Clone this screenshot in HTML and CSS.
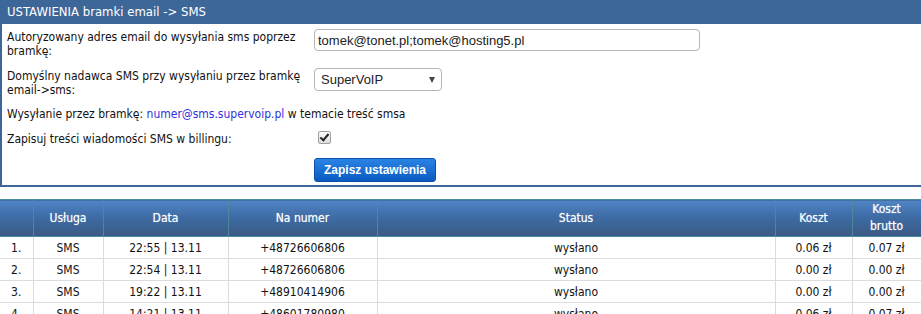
FILE: index.html
```html
<!DOCTYPE html>
<html lang="pl">
<head>
    <meta charset="UTF-8">
    <title>Bramka email -> SMS</title>
    <link rel="stylesheet" href="styles.css">
</head>
<body>
    <div class="panel">
        <div class="panel-title">USTAWIENIA bramki email -&gt; SMS</div>
        <div class="form">
            <div class="label">Autoryzowany adres email do wysyłania sms poprzez bramkę:</div>
            <div class="field"><input type="text" class="text-input" value="tomek@tonet.pl;tomek@hosting5.pl"></div>

            <div class="label">Domyślny nadawca SMS przy wysyłaniu przez bramkę email-&gt;sms:</div>
            <div class="field">
                <span class="select-wrap">
                    <select class="select">
                        <option>SuperVoIP</option>
                    </select>
                </span>
            </div>

            <div class="full">Wysyłanie przez bramkę: <a href="#" class="link">numer@sms.supervoip.pl</a> w temacie treść smsa</div>

            <div class="label">Zapisuj treści wiadomości SMS w billingu:</div>
            <div class="field"><input type="checkbox" class="check" checked></div>

            <div class="label"></div>
            <div class="field"><button class="save">Zapisz ustawienia</button></div>
        </div>
    </div>

    <table class="history">
        <colgroup>
            <col style="width: 33px">
            <col style="width: 70px">
            <col style="width: 125px">
            <col style="width: 149px">
            <col style="width: 398px">
            <col style="width: 77px">
            <col style="width: 69px">
        </colgroup>
        <thead>
            <tr>
                <th></th>
                <th>Usługa</th>
                <th>Data</th>
                <th>Na numer</th>
                <th>Status</th>
                <th>Koszt</th>
                <th>Koszt<br>brutto</th>
            </tr>
        </thead>
        <tbody>
            <tr>
                <td>1.</td><td>SMS</td><td>22:55 | 13.11</td><td>+48726606806</td><td>wysłano</td><td>0.06 zł</td><td>0.07 zł</td>
            </tr>
            <tr>
                <td>2.</td><td>SMS</td><td>22:54 | 13.11</td><td>+48726606806</td><td>wysłano</td><td>0.00 zł</td><td>0.00 zł</td>
            </tr>
            <tr>
                <td>3.</td><td>SMS</td><td>19:22 | 13.11</td><td>+48910414906</td><td>wysłano</td><td>0.00 zł</td><td>0.00 zł</td>
            </tr>
            <tr>
                <td>4.</td><td>SMS</td><td>14:21 | 13.11</td><td>+48601780980</td><td>wysłano</td><td>0.06 zł</td><td>0.07 zł</td>
            </tr>
        </tbody>
    </table>
</body>
</html>
```

FILE: styles.css
```css
body {
    margin: 0;
    font-family: "DejaVu Sans Condensed", "DejaVu Sans", sans-serif;
    font-size: 12px;
    color: #111;
    background: #fff;
    width: 921px;
    overflow: hidden;
}

.panel {
    border-left: 2px solid #3d6699;
    border-bottom: 2px solid #3d6699;
    padding-bottom: 3px;
}

.panel-title {
    background: #3d6699;
    color: #fff;
    font-size: 13px;
    height: 24px;
    line-height: 24px;
    margin-left: -2px;
    padding-left: 7px;
}

.form {
    display: grid;
    grid-template-columns: 307px 1fr;
    row-gap: 10px;
    padding: 5px 0 0 5px;
    line-height: 14px;
}

.label {
    padding-top: 1px;
}

.full {
    grid-column: 1 / 3;
}

.text-input {
    width: 386px;
    height: 22px;
    box-sizing: border-box;
    border: 1px solid #b5b5b5;
    border-radius: 4px;
    padding: 0 3px;
    font-family: "Liberation Sans", Arial, sans-serif;
    font-size: 13px;
    color: #222;
    margin: 0;
}

.select-wrap {
    position: relative;
    display: inline-block;
}

.select-wrap::after {
    content: "";
    position: absolute;
    right: 7px;
    top: 9px;
    border-left: 3px solid transparent;
    border-right: 3px solid transparent;
    border-top: 6px solid #444;
    pointer-events: none;
}

.select {
    appearance: none;
    width: 128px;
    height: 23px;
    box-sizing: border-box;
    border: 1px solid #b5b5b5;
    border-radius: 4px;
    background: #fff;
    padding: 0 6px;
    font-family: "Liberation Sans", Arial, sans-serif;
    font-size: 13px;
    color: #222;
    margin: 0;
}

.link {
    color: #3030dd;
    text-decoration: none;
}

.check {
    appearance: none;
    width: 13px;
    height: 13px;
    margin: 0 0 0 4px;
    border: 1px solid #a0a0a0;
    border-radius: 2px;
    background: linear-gradient(#fcfcfc, #dcdcdc);
    position: relative;
    vertical-align: top;
}

.check::after {
    content: "";
    position: absolute;
    left: 3px;
    top: 0;
    width: 3px;
    height: 7px;
    border-right: 2px solid #222;
    border-bottom: 2px solid #222;
    transform: rotate(40deg);
}

.save {
    margin-top: 2px;
    width: 122px;
    height: 24px;
    border: 1px solid #0a4fa8;
    border-radius: 3px;
    background: linear-gradient(#2a84e4, #0a5bc3);
    color: #fff;
    font-family: "Liberation Sans", Arial, sans-serif;
    font-weight: bold;
    font-size: 12px;
    padding: 0;
}

.history {
    margin-top: 12px;
    width: 921px;
    border-collapse: collapse;
    table-layout: fixed;
}

.history th {
    height: 36px;
    padding: 0;
    border: 1px solid #4b8a9c;
    background: linear-gradient(#5085c6, #3e6ca5 45%, #3a5a84);
    color: #fff;
    font-weight: normal;
    line-height: 17px;
    text-shadow: 0 0 1px rgba(255, 255, 255, 0.6);
}

.history td {
    height: 21px;
    padding: 0;
    border: 1px solid #dcdcdc;
    text-align: center;
    color: #111;
}

.history tr > :first-child {
    border-left: none;
}
```
